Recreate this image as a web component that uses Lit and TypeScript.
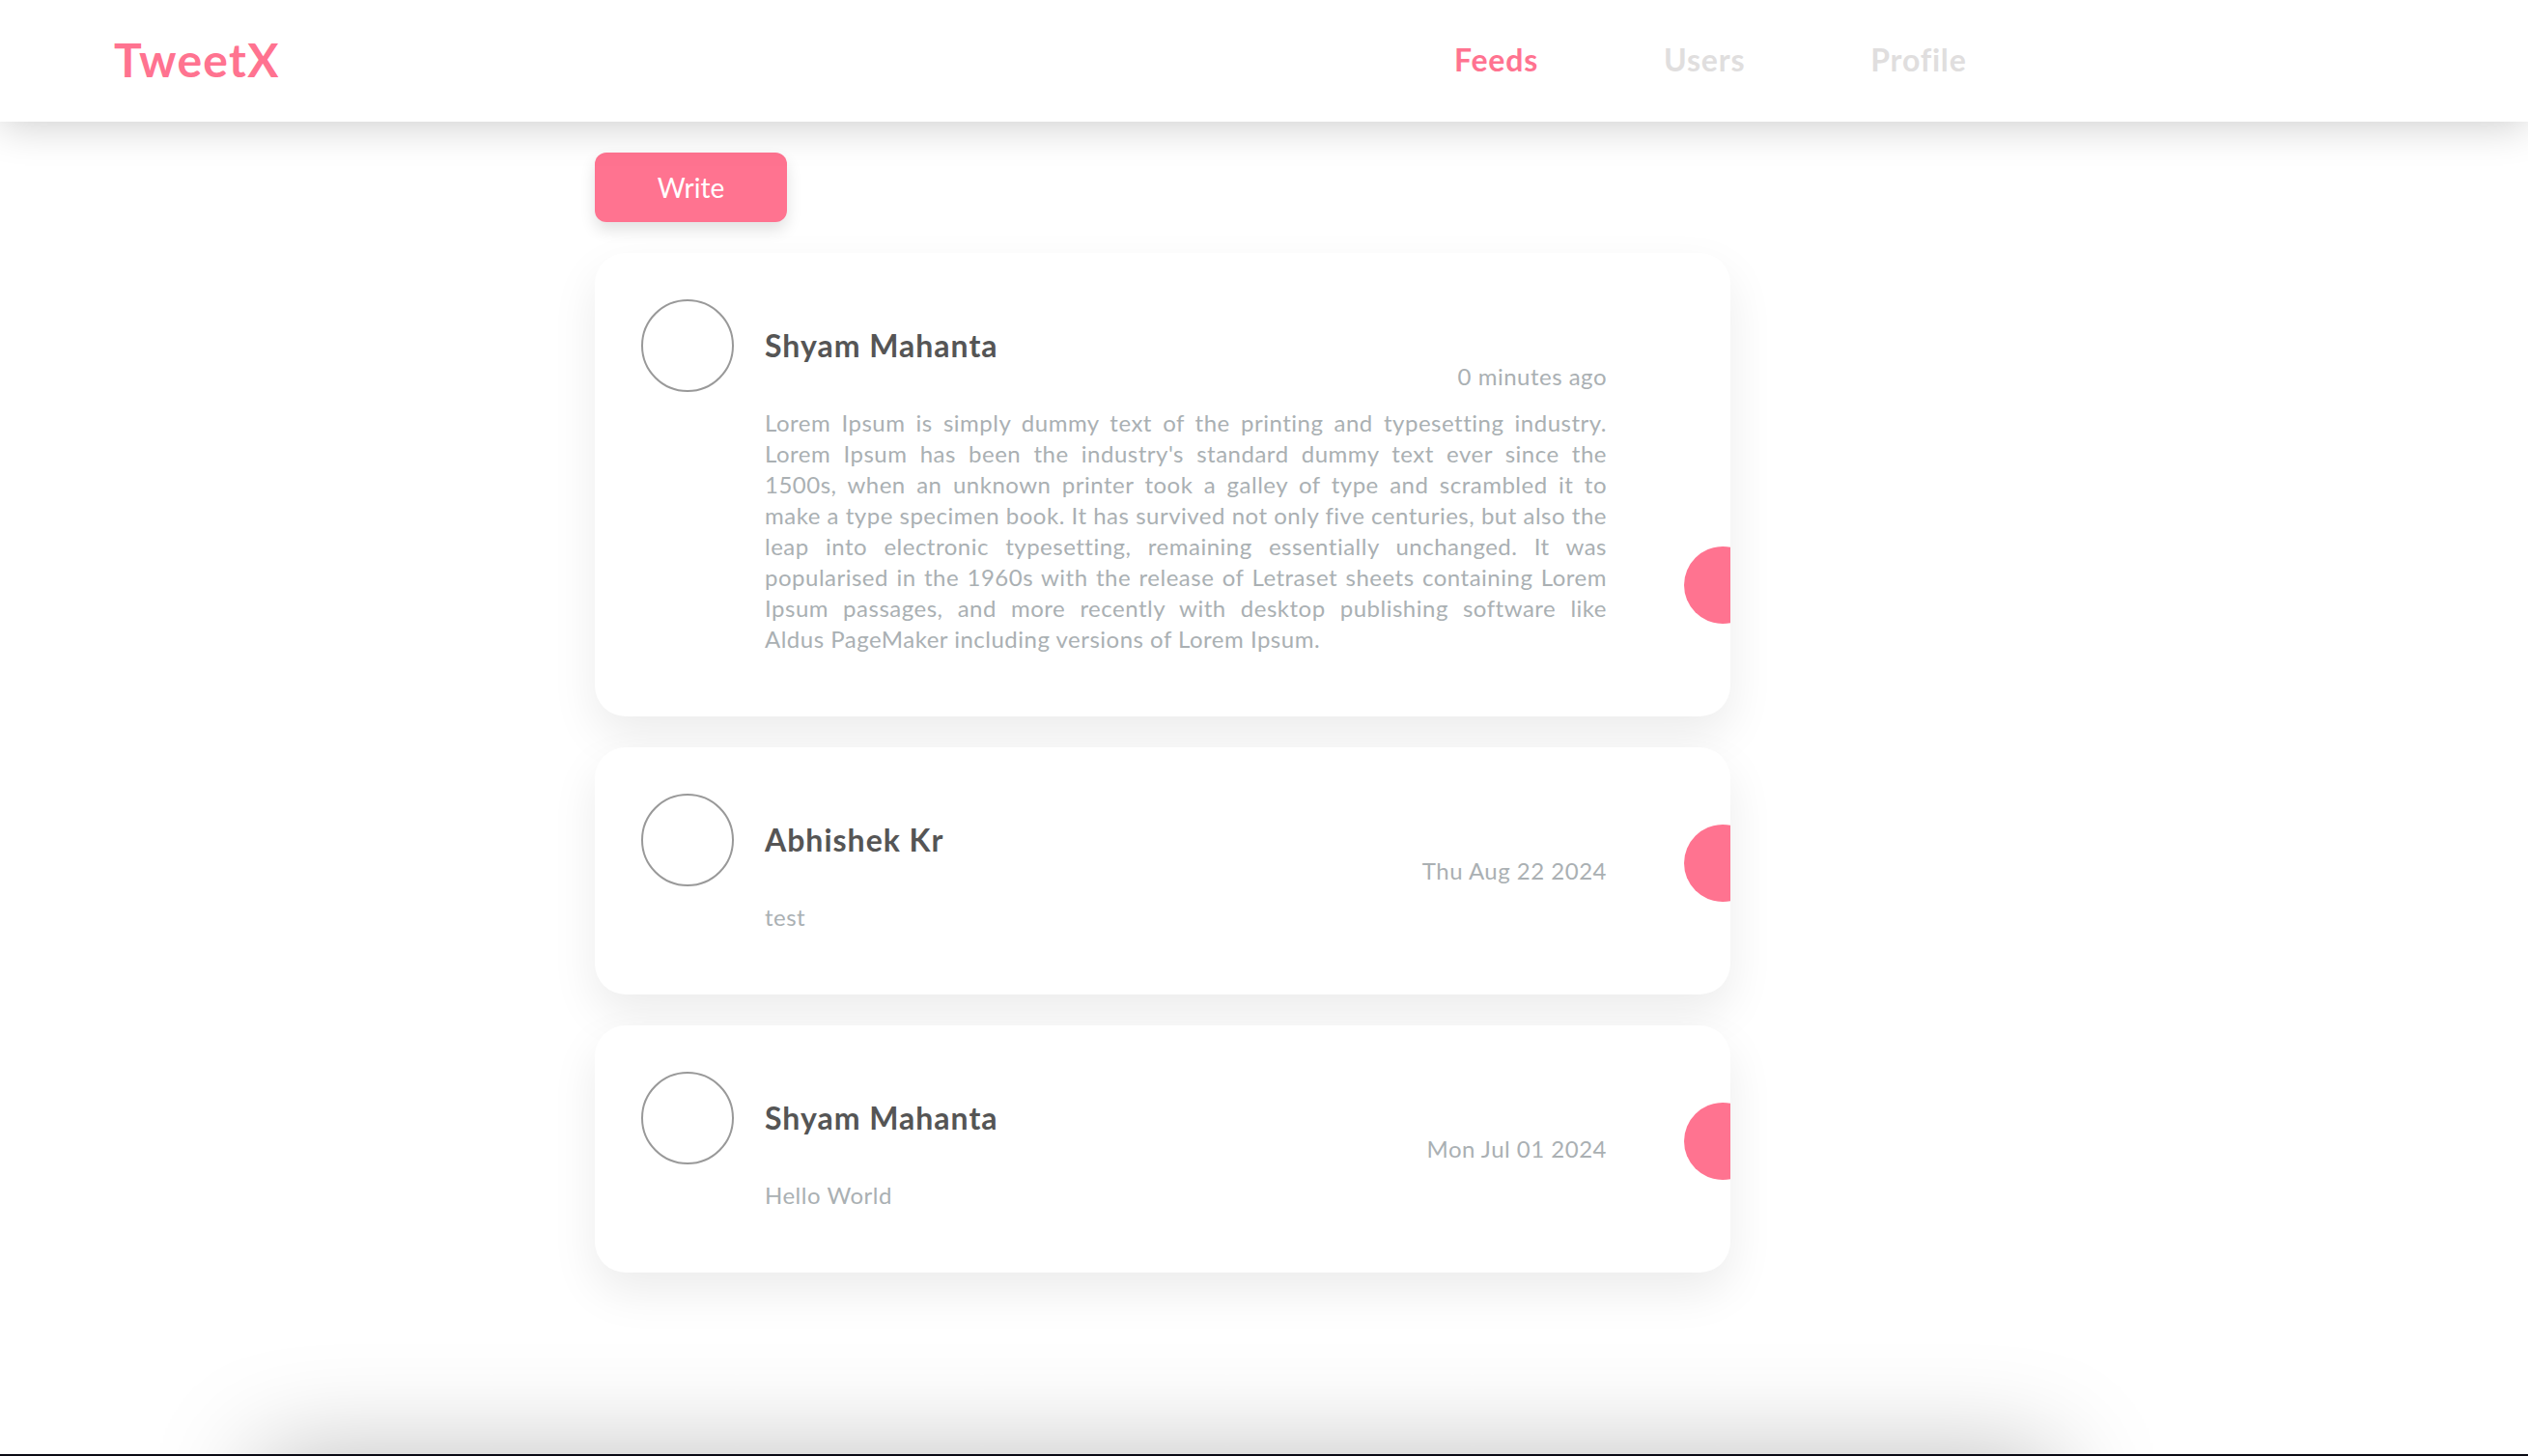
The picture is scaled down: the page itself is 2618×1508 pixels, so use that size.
import { LitElement, html, css } from 'lit';
import { customElement, property } from 'lit/decorators.js';

// nbsp in "Aldus PageMaker" keeps the line break where the reference has it
const LOREM =
  "Lorem Ipsum is simply dummy text of the printing and typesetting industry. Lorem Ipsum has been the industry's standard dummy text ever since the 1500s, when an unknown printer took a galley of type and scrambled it to make a type specimen book. It has survived not only five centuries, but also the leap into electronic typesetting, remaining essentially unchanged. It was popularised in the 1960s with the release of Letraset sheets containing Lorem Ipsum passages, and more recently with desktop publishing software like Aldus\u00a0PageMaker including versions of Lorem Ipsum.";

const POSTS = [
  { name: 'Shyam Mahanta', time: '0 minutes ago', text: LOREM },
  { name: 'Abhishek Kr', time: 'Thu Aug 22 2024', text: 'test' },
  { name: 'Shyam Mahanta', time: 'Mon Jul 01 2024', text: 'Hello World' }
];

@customElement('tweet-card')
export class TweetCard extends LitElement {
  @property({ type: String }) name = '';
  @property({ type: String }) time = '';
  @property({ type: String }) text = '';

  static styles = css`
    :host {
      display: block;
    }
    .card {
      display: flex;
      background: #fff;
      border-radius: 32px;
      box-shadow: 0 20px 48px rgba(0, 0, 0, 0.08);
      overflow: hidden;
      padding: 48px 0 64px 48px;
    }
    .avatar {
      flex: none;
      width: 96px;
      height: 96px;
      box-sizing: border-box;
      border: 2px solid #999;
      border-radius: 50%;
    }
    .body {
      flex: none;
      width: 872px;
      margin-left: 32px;
    }
    .name {
      margin-top: 28px;
      font-size: 32px;
      line-height: 40px;
      font-weight: 700;
      letter-spacing: 1px;
      color: #555;
    }
    .time {
      margin-top: -4px;
      font-size: 24px;
      line-height: 32px;
      letter-spacing: 0.5px;
      text-align: right;
      color: #aab0b3;
    }
    .text {
      margin: 16px 0 0;
      font-size: 24px;
      line-height: 32px;
      letter-spacing: 0.5px;
      text-align: justify;
      color: #aab0b3;
    }
    .dot {
      flex: none;
      align-self: flex-end;
      width: 80px;
      height: 80px;
      margin: 0 0 32px 80px;
      border-radius: 50%;
      background: #ff7390;
    }
  `;

  render() {
    return html`
      <article class="card">
        <div class="avatar"></div>
        <div class="body">
          <div class="name">${this.name}</div>
          <div class="time">${this.time}</div>
          <p class="text">${this.text}</p>
        </div>
        <div class="dot"></div>
      </article>
    `;
  }
}

@customElement('app-root')
export class AppRoot extends LitElement {
  static styles = css`
    :host {
      display: block;
      font-family: 'Lato', 'Liberation Sans', sans-serif;
      background: #000;
    }
    .page {
      height: 1506px;
      overflow: hidden;
      background: #fff;
    }
    header {
      position: relative;
      z-index: 1;
      box-sizing: border-box;
      display: flex;
      align-items: center;
      height: 126px;
      padding: 0 0 3px 118px;
      background: #fff;
      box-shadow: 0 4px 40px rgba(0, 0, 0, 0.2);
    }
    .logo {
      width: 1388px;
      font-size: 48px;
      font-weight: 700;
      letter-spacing: 1.3px;
      color: #ff7390;
    }
    nav {
      display: flex;
      gap: 130px;
      font-size: 32px;
      font-weight: 700;
      letter-spacing: 0.8px;
      color: #e0dede;
    }
    nav .active {
      color: #ff7390;
    }
    main {
      box-sizing: border-box;
      height: 1380px;
      width: 1176px;
      margin-left: 616px;
      padding-top: 32px;
    }
    .write {
      display: block;
      width: 199px;
      height: 72px;
      border: 0;
      border-radius: 12px;
      background: #ff7390;
      box-shadow: 0 8px 16px rgba(0, 0, 0, 0.12);
      font: inherit;
      font-size: 28px;
      color: #fff;
    }
    .feed {
      display: flex;
      flex-direction: column;
      gap: 32px;
      margin-top: 32px;
    }
    footer {
      width: 1860px;
      height: 200px;
      margin-left: 268px;
      box-shadow: 0 0 110px rgba(0, 0, 0, 0.26);
    }
    .strip {
      height: 2px;
      background: #0a0a14;
    }
  `;

  render() {
    return html`
      <div class="page">
        <header>
          <div class="logo">TweetX</div>
          <nav>
            <span class="active">Feeds</span>
            <span>Users</span>
            <span>Profile</span>
          </nav>
        </header>
        <main>
          <button class="write">Write</button>
          <div class="feed">
            ${POSTS.map(
              (p) => html`<tweet-card .name=${p.name} .time=${p.time} .text=${p.text}></tweet-card>`
            )}
          </div>
        </main>
        <footer></footer>
      </div>
      <div class="strip"></div>
    `;
  }
}
